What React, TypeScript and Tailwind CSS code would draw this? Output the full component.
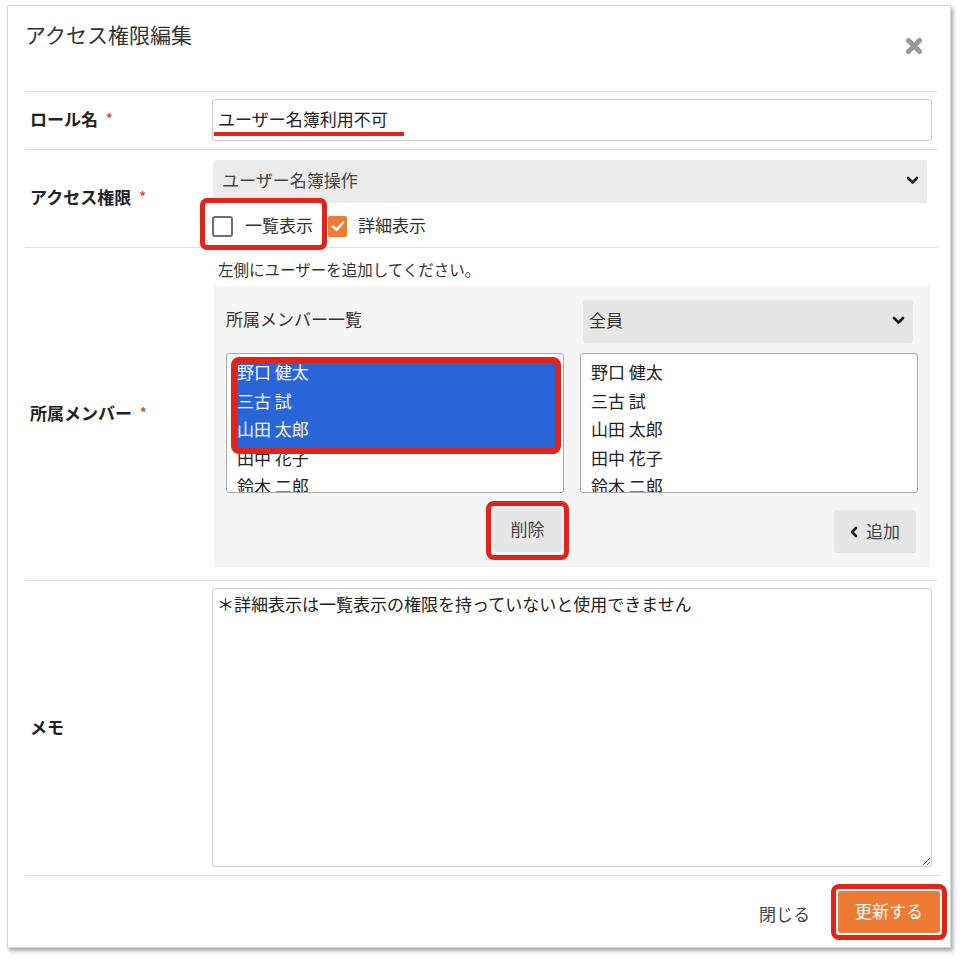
import React from 'react'

const font = { fontFamily: '"Noto Sans CJK JP", "Noto Sans", sans-serif' }

const members = ['野口 健太', '三古 試', '山田 太郎', '田中 花子', '鈴木 二郎']

function Chevron() {
  return (
    <svg width="13" height="9" viewBox="0 0 13 9" fill="none">
      <polyline points="2,2 6.5,6.5 11,2" stroke="#1f1f1f" strokeWidth="2.6" strokeLinecap="round" strokeLinejoin="round" />
    </svg>
  )
}

function Required() {
  return <span className="ml-[8px] text-[13px] text-[#e5452f] align-top relative top-[-1px]">*</span>
}

function Label({ children }: { children: React.ReactNode }) {
  return (
    <div className="pl-[5px] pb-[3px] flex items-center text-[17px] font-bold text-[#222]">
      {children}
      <Required />
    </div>
  )
}

function ListBox({ selected }: { selected: number }) {
  return (
    <div className="relative h-[140px] border border-[#aaa] rounded-[3px] bg-white">
      <div className="h-full overflow-hidden pt-[8px] pl-[10px] pr-[8px]">
        {members.map((m, i) => (
          <div
            key={m}
            className={`h-[28.5px] leading-[19px] text-[17px] ${i < selected ? 'bg-[#2a65d8] text-[#f2f5ff]' : 'text-[#222]'}`}
          >
            {m}
          </div>
        ))}
      </div>
      {selected > 0 && (
        <div className="absolute left-[4px] top-[3px] w-[330px] h-[97px] border-[6px] border-[#e2231a] rounded-[8px]" />
      )}
    </div>
  )
}

export default function App() {
  return (
    <div className="min-h-screen bg-white pt-[5px] pl-[7px]" style={font}>
      <div className="w-[944px] h-[943px] bg-white border border-[#d6d6d6] shadow-[2px_3px_4px_rgba(0,0,0,0.35)] flex flex-col">
        {/* Header */}
        <div className="h-[85px] flex justify-between pl-[17px] pr-[27px] pt-[14px]">
          <h1 className="text-[21px] leading-[28px] text-[#333] font-normal">アクセス権限編集</h1>
          <svg width="18" height="18" viewBox="0 0 18 18" className="mt-[17px]">
            <path d="M3.5 3.5 L14.5 14.5 M14.5 3.5 L3.5 14.5" stroke="#999" strokeWidth="5" strokeLinecap="round" />
          </svg>
        </div>

        <div className="ml-[17px] mr-[13px] flex-1 flex flex-col">
          {/* Role name */}
          <div className="grid grid-cols-[187px_1fr] border-t border-[#ddd]">
            <Label>ロール名</Label>
            <div className="pt-[7px] pb-[8px] pr-[5px]">
              <div className="relative h-[42px] border border-[#ccc] rounded-[3px] flex items-center pb-[3px] px-[5px] text-[17px] text-[#222]">
                ユーザー名簿利用不可
                <div className="absolute left-[1px] top-[32px] w-[190px] h-[4px] bg-[#e2231a]" />
              </div>
            </div>
          </div>

          {/* Access */}
          <div className="grid grid-cols-[187px_1fr] border-t border-[#ddd]">
            <Label>アクセス権限</Label>
            <div className="pt-[10px] pb-[10px]">
              <div className="h-[43px] mr-[10px] ml-[1px] bg-[#ebebeb] rounded-[3px] flex items-center justify-between pb-[3px] pl-[9px] pr-[8px] text-[17px] text-[#444]">
                ユーザー名簿操作
                <Chevron />
              </div>
              <div className="mt-[12px] h-[22px] flex items-center text-[17px] text-[#333]">
                <div className="relative flex items-center">
                  <span className="w-[21px] h-[21px] border-2 border-[#6f6f6f] rounded-[3px] bg-white" />
                  <span className="ml-[12px] relative top-[-1px]">一覧表示</span>
                  <div className="absolute left-[-12px] top-[-15px] w-[127px] h-[52px] border-[5px] border-[#e2231a] rounded-[7px]" />
                </div>
                <span className="ml-[15px] w-[19px] h-[21px] bg-[#ee7b33] rounded-[2px] flex items-center justify-center">
                  <svg width="14" height="12" viewBox="0 0 14 12">
                    <polyline points="2,6.5 5.5,10 12,2.5" fill="none" stroke="#fff" strokeWidth="2.4" strokeLinecap="round" strokeLinejoin="round" />
                  </svg>
                </span>
                <span className="ml-[11px] relative top-[-1px]">詳細表示</span>
              </div>
            </div>
          </div>

          {/* Members */}
          <div className="grid grid-cols-[187px_1fr] border-t border-[#ddd]">
            <Label>所属メンバー</Label>
            <div className="pt-[10px] pb-[13px]">
              <p className="pl-[6px] text-[15.5px] leading-[22px] text-[#333]">左側にユーザーを追加してください。</p>
              <div className="mt-[6px] ml-[2px] w-[716px] bg-[#f5f5f5] pt-[14px] pb-[14px] pl-[12px] pr-[12px]">
                <div className="grid grid-cols-[338px_338px] gap-x-[16px]">
                  <div className="h-[43px] flex items-center pb-[6px] text-[17px] text-[#333]">所属メンバー一覧</div>
                  <div className="h-[43px] ml-[3px] mr-[5px] bg-[#e6e6e6] rounded-[3px] flex items-center justify-between pb-[3px] pl-[6px] pr-[8px] text-[17px] text-[#333]">
                    全員
                    <Chevron />
                  </div>
                  <div className="mt-[10px]">
                    <ListBox selected={3} />
                  </div>
                  <div className="mt-[10px]">
                    <ListBox selected={0} />
                  </div>
                  <div className="mt-[15px] flex justify-end pr-[2px]">
                    <div className="relative">
                      <button className="w-[69px] h-[44px] pb-[2px] bg-[#e6e6e6] rounded-[3px] text-[17px] text-[#444]">削除</button>
                      <div className="absolute -inset-[7px] border-[5px] border-[#e2231a] rounded-[8px]" />
                    </div>
                  </div>
                  <div className="mt-[17px] flex justify-end pr-[2px]">
                    <button className="w-[82px] h-[43px] pb-[2px] bg-[#e6e6e6] rounded-[3px] flex items-center justify-center gap-[8px] text-[17px] text-[#444]">
                      <svg width="8" height="12" viewBox="0 0 8 12" className="mt-[2px]">
                        <polyline points="6,2 2,6 6,10" fill="none" stroke="#1f1f1f" strokeWidth="2.6" strokeLinecap="round" strokeLinejoin="round" />
                      </svg>
                      追加
                    </button>
                  </div>
                </div>
              </div>
            </div>
          </div>

          {/* Memo */}
          <div className="grid grid-cols-[187px_1fr] border-t border-[#ddd]">
            <div className="pl-[5px] pb-[3px] flex items-center text-[17px] font-bold text-[#222]">メモ</div>
            <div className="pt-[7px] pb-[8px] pr-[5px]">
              <textarea
                readOnly
                defaultValue="＊詳細表示は一覧表示の権限を持っていないと使用できません"
                className="block w-full h-[279px] border border-[#ccc] rounded-[3px] px-[4px] pt-[3px] text-[17px] leading-[24px] text-[#222] outline-none"
                style={font}
              />
            </div>
          </div>

          {/* Footer */}
          <div className="flex-1 border-t border-[#ddd] flex items-center justify-end -mr-[3px]">
            <button className="text-[17px] text-[#444] mr-[28px] mt-[4px]">閉じる</button>
            <div className="relative">
              <button className="w-[102px] h-[42px] pb-[2px] bg-[#ee7b33] rounded-[3px] text-[17px] text-white">更新する</button>
              <div className="absolute -inset-[7px] border-[5px] border-[#e2231a] rounded-[8px]" />
            </div>
          </div>
        </div>
      </div>
    </div>
  )
}
